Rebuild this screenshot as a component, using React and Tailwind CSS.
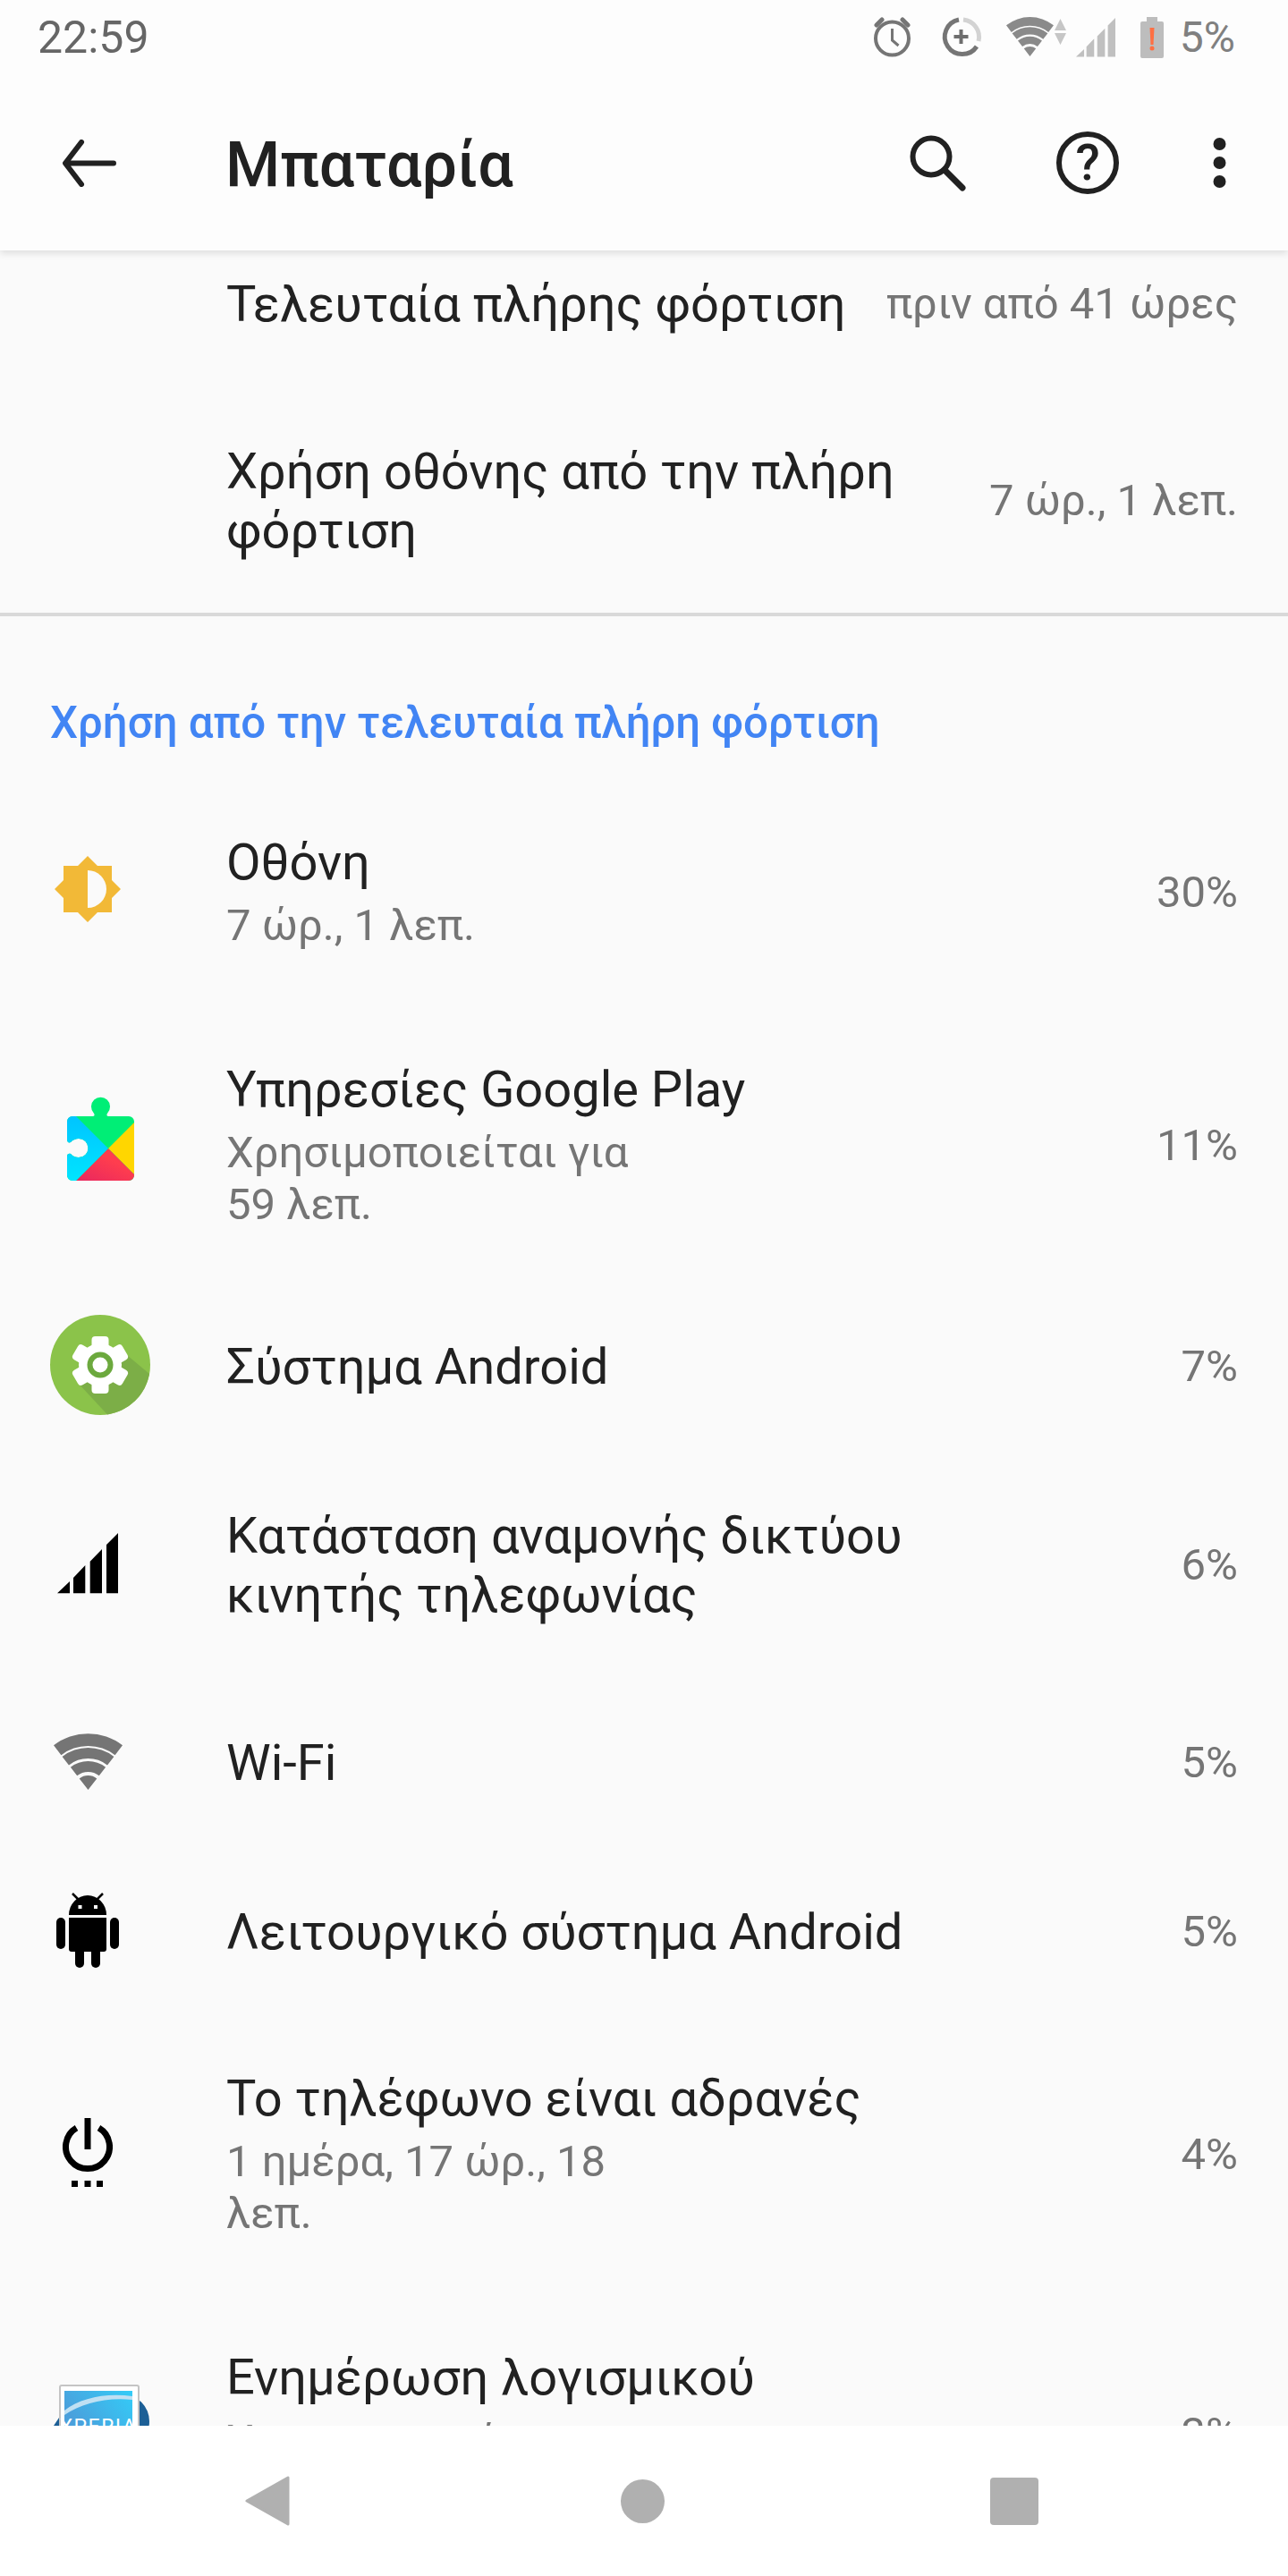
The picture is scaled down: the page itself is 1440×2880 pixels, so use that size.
const WIFI_BANDS = 'M0 13.3A63 63 0 0 1 77 13.3L68.6 24.3A49 49 0 0 0 8.4 24.3zM9.6 25.9A47 47 0 0 1 67.4 25.9L60 35.4A35 35 0 0 0 17 35.4zM18.9 37.8A32 32 0 0 1 58.1 37.8L50.8 47.2A20 20 0 0 0 26.2 47.2zM28.7 50.4A16 16 0 0 1 48.3 50.4L38.5 63z'
const SIGNAL_BARS = 'M0 67.300L14 54V67.300zM18 50L31.300 36V67.300H18zM36.700 31.700L50 18V67.300H36.700zM55 13L68 0V67.300H55z'

const Row = ({ icon, small, title, sub, value, className }) => (
  <div className={`flex items-center pl-[56px] pr-[56px] ${className}`}>
    <div className={`h-[112px] flex-none flex items-center justify-center ${small ? 'w-[84px] mr-[28px]' : 'w-[112px]'}`}>{icon}</div>
    <div className="flex-1 ml-[85px] min-w-0">
      <div className="text-[56px] leading-[66px] text-[#212121] whitespace-pre-line">{title}</div>
      {sub && <div className="text-[49px] leading-[58px] text-[#757575] whitespace-pre-line mt-[9px]">{sub}</div>}
    </div>
    <div className="text-[49px] leading-[58px] text-[#757575]">{value}</div>
  </div>
)

const Sun = () => (
  <svg width="74" height="74" viewBox="0 0 74 74" className="mb-[8px]">
    <path fill="#f2b937" d="M37 0l11 11h16v16l10 10-10 10v16H48L37 74 26 63H10V47L0 37l10-10V11h16z" />
    <path fill="#fafafa" d="M37 16a21 21 0 0 1 0 42z" />
  </svg>
)

const Puzzle = () => (
  <svg width="75" height="96" viewBox="0 0 75 96" className="mb-[17px]">
    <defs>
      <clipPath id="pz">
        <path d="M6 24h23c2 0 2-2 .5-4a10.500 10.500 0 1 1 16 0c-1.500 2-1.500 4 .5 4h23a6 6 0 0 1 6 6v60a6 6 0 0 1-6 6H6a6 6 0 0 1-6-6V69c0-3 2-4 4-3 3 3 6 4 9 4a10.500 10.500 0 0 0 0-21c-3 0-6 1-9 4-2 1-4 0-4-3V30a6 6 0 0 1 6-6z" />
      </clipPath>
      <linearGradient id="pzred" x1="0" y1="1" x2="1" y2="0">
        <stop offset="0" stopColor="#e8275f" />
        <stop offset="0.6" stopColor="#ff3d4e" />
      </linearGradient>
      <linearGradient id="pzblue" x1="0" y1="0" x2="0" y2="1">
        <stop offset="0" stopColor="#00c4ff" />
        <stop offset="1" stopColor="#00e5ff" />
      </linearGradient>
    </defs>
    <g clipPath="url(#pz)">
      <rect width="75" height="96" fill="#00ee76" />
      <path fill="#ffd600" d="M46 60L75 31v58z" />
      <path fill="url(#pzred)" d="M46 60l36 36H10z" />
      <path fill="url(#pzblue)" d="M0 24h10l36 36-36 36H0z" />
    </g>
  </svg>
)

const Gear = () => (
  <svg width="112" height="112" viewBox="0 0 112 112" className="mb-[4px]">
    <circle cx="56" cy="56" r="56" fill="#8bc34a" />
    <path fill="#7cae47" d="M32 77L64 111.500A56 56 0 0 0 111 66L86 45z" />
    <g fill="#fff">
      <circle cx="56" cy="56" r="24" />
      {[0, 60, 120, 180, 240, 300].map(a => (
        <rect key={a} x="46.500" y="24" width="19" height="20" rx="4" transform={`rotate(${a} 56 56)`} />
      ))}
    </g>
    <circle cx="56" cy="56" r="11.500" fill="#fff" stroke="#6ca93e" strokeWidth="6" />
  </svg>
)

const Signal = () => (
  <svg width="68" height="68" viewBox="0 0 68 68" className="mb-[4px]">
    <path fill="#000" d={SIGNAL_BARS} />
  </svg>
)

const Wifi = () => (
  <svg width="77" height="63" viewBox="0 0 77 63" className="mb-[3px]">
    <path fill="#757575" d={WIFI_BANDS} />
  </svg>
)

const Droid = () => (
  <svg width="70" height="84" viewBox="0 0 70 84" className="mb-[4px]">
    <path fill="#000" d="M14 25a21 22 0 0 1 42 0zM14 28h42v35a3 3 0 0 1-3 3H17a3 3 0 0 1-3-3z" />
    <rect x="0" y="28" width="10" height="35" rx="5" />
    <rect x="60" y="28" width="10" height="35" rx="5" />
    <rect x="21" y="60" width="10" height="24" rx="5" />
    <rect x="39" y="60" width="10" height="24" rx="5" />
    <path stroke="#000" strokeWidth="2.500" d="M18 1l7 7M52 1l-7 7" />
    <rect x="24.500" y="14" width="4" height="4" fill="#fafafa" />
    <rect x="42" y="14" width="4" height="4" fill="#fafafa" />
  </svg>
)

const Idle = () => (
  <svg width="56" height="77" viewBox="0 0 56 77" className="mb-[4px]">
    <path fill="none" stroke="#000" strokeWidth="7" d="M15.500 11A24.500 24.500 0 1 0 40.500 11" />
    <rect x="24.500" y="0" width="7" height="35" />
    <rect x="10" y="70" width="7" height="7" />
    <rect x="24.500" y="70" width="7" height="7" />
    <rect x="38" y="70" width="7" height="7" />
  </svg>
)

const Xperia = () => (
  <svg width="112" height="112" viewBox="0 0 112 112">
    <defs>
      <linearGradient id="xp" x1="1" y1="0" x2="0" y2="1">
        <stop offset="0" stopColor="#33ccf8" />
        <stop offset="0.6" stopColor="#4aa0dc" />
      </linearGradient>
    </defs>
    <circle cx="81" cy="42" r="30" fill="#1c5f96" />
    <path d="M2 50L10 38v12z" fill="#1c5f96" />
    <rect x="11" y="2" width="88" height="108" rx="2" fill="#fff" stroke="#c4c4c4" strokeWidth="2" />
    <rect x="16" y="8" width="76" height="96" fill="url(#xp)" />
    <path d="M16 30C34 16 62 10 92 14v4C62 15 36 22 16 35z" fill="#bfe0f3" />
    <text x="54" y="56" textAnchor="middle" fontSize="23" letterSpacing="1.500" fill="#fff" fontFamily="Roboto">XPERIA</text>
  </svg>
)

const StatusIcons = () => (
  <svg width="325" height="46" viewBox="0 0 325 46" className="flex-none">
    <g fill="none" stroke="#757575">
      <circle cx="21.500" cy="24" r="18.500" strokeWidth="4" />
      <path strokeWidth="3" d="M21.500 13v13l7 6" />
      <path strokeWidth="5" strokeLinecap="round" d="M4 9l6-6M39 9l-6-6" />
      <path strokeWidth="5" d="M96 3a19.500 19.500 0 1 0 20 30" />
      <path strokeWidth="5" stroke="#d3d3d3" d="M101 3a19.500 19.500 0 0 1 17 24" />
      <path strokeWidth="4" stroke="#6e6e6e" d="M98.500 14v16M90.500 22h16" />
    </g>
    <g transform="translate(149 0) scale(.688 .7)">
      <path fill="#8a8a8a" d={WIFI_BANDS} />
    </g>
    <path fill="#c6c6c6" d="M203 15l6.500-13 6.500 13zM203 18h13l-6.500 13z" />
    <g transform="translate(227 1) scale(.647)">
      <path fill="#c0c0c0" d={SIGNAL_BARS} />
    </g>
    <path fill="#bdbdbd" d="M306 0h12v5h5a2 2 0 0 1 2 2v37a2 2 0 0 1-2 2h-22a2 2 0 0 1-2-2V7a2 2 0 0 1 2-2h5z" />
    <path fill="#ff7043" d="M309.500 12h5l-1 19h-3z" />
    <circle cx="312" cy="35" r="2.500" fill="#ff7043" />
  </svg>
)

export default function App() {
  return (
    <div className="w-[1440px] h-[2880px] flex flex-col overflow-hidden bg-[#fafafa] font-['Roboto',sans-serif]">
      <header className="relative z-10 flex-none h-[280px] bg-[#fdfdfd] shadow-[0_3px_8px_rgba(0,0,0,0.12)]">
        <div className="h-[84px] flex items-center pl-[42px] pr-[59px]">
          <span className="text-[50px] leading-none text-[#666]">22:59</span>
          <span className="flex-1" />
          <StatusIcons />
          <span className="text-[48px] leading-none text-[#808080] ml-[18px]">5%</span>
        </div>
        <div className="h-[196px] flex items-center pl-[70px] pr-[69px]">
          <svg width="60" height="53" viewBox="0 0 60 53" className="flex-none">
            <path fill="none" stroke="#212121" strokeWidth="6" strokeLinecap="round" strokeLinejoin="round" d="M57 26.500H4M21 3L3 26.500 21 50" />
          </svg>
          <h1 className="ml-[122px] mt-[4px] text-[70px] leading-none font-medium text-[#212121]">Μπαταρία</h1>
          <span className="flex-1" />
          <svg width="63" height="63" viewBox="0 0 63 63" className="flex-none mr-[101px]">
            <circle cx="24" cy="24" r="20.500" fill="none" stroke="#212121" strokeWidth="6" />
            <path stroke="#212121" strokeWidth="7" strokeLinecap="round" d="M39 39l20 20" />
          </svg>
          <div className="w-[70px] h-[70px] flex-none rounded-full border-[6px] border-[#212121] flex items-center justify-center text-[56px] leading-none font-medium text-[#212121] mr-[105px]">?</div>
          <svg width="15" height="56" viewBox="0 0 15 56" className="flex-none">
            <circle cx="7.500" cy="7" r="7" fill="#212121" />
            <circle cx="7.500" cy="28" r="7" fill="#212121" />
            <circle cx="7.500" cy="49" r="7" fill="#212121" />
          </svg>
        </div>
      </header>

      <main className="flex-1 min-h-0 overflow-hidden">
        <div className="flex items-center justify-between pl-[253px] pr-[56px] h-[120px]">
          <div className="text-[56px] leading-[66px] text-[#212121]">Τελευταία πλήρης φόρτιση</div>
          <div className="text-[49px] text-[#757575]">πριν από 41 ώρες</div>
        </div>
        <div className="flex items-center justify-between pl-[253px] pr-[56px] h-[289px] pt-[34px] border-b-[4px] border-[#d9d9d9]">
          <div className="text-[56px] leading-[66px] text-[#212121] w-[800px]">Χρήση οθόνης από την πλήρη φόρτιση</div>
          <div className="text-[49px] text-[#757575]">7 ώρ., 1 λεπ.</div>
        </div>
        <div className="pl-[56px] pt-[86px] text-[49.2px] leading-[66px] font-medium text-[#4285f4]">Χρήση από την τελευταία πλήρη φόρτιση</div>

        <Row small className="mt-[90px]" icon={<Sun />} title="Οθόνη" sub="7 ώρ., 1 λεπ." value="30%" />
        <Row className="mt-[121px]" icon={<Puzzle />} title="Υπηρεσίες Google Play" sub={"Χρησιμοποιείται για\n59 λεπ."} value="11%" />
        <Row className="mt-[96px]" icon={<Gear />} title="Σύστημα Android" value="7%" />
        <Row small className="mt-[100px]" icon={<Signal />} title={"Κατάσταση αναμονής δικτύου\nκινητής τηλεφωνίας"} value="6%" />
        <Row small className="mt-[99px]" icon={<Wifi />} title="Wi-Fi" value="5%" />
        <Row small className="mt-[77px]" icon={<Droid />} title="Λειτουργικό σύστημα Android" value="5%" />
        <Row small className="mt-[97px]" icon={<Idle />} title="Το τηλέφωνο είναι αδρανές" sub={"1 ημέρα, 17 ώρ., 18\nλεπ."} value="4%" />
        <Row className="mt-[121px]" icon={<Xperia />} title="Ενημέρωση λογισμικού" sub={"Χρησιμοποιείται για\n1 λεπ."} value="3%" />
      </main>

      <nav className="relative z-10 flex-none h-[168px] bg-white flex items-center pl-[274px]">
        <svg width="50" height="56" viewBox="0 0 50 56" className="flex-none">
          <path fill="#b0b0b0" stroke="#b0b0b0" strokeWidth="3" strokeLinejoin="round" d="M48 2v52L2 28z" />
        </svg>
        <div className="w-[49px] h-[49px] flex-none rounded-full bg-[#b0b0b0] ml-[370px]" />
        <div className="w-[54px] h-[53px] flex-none rounded-[4px] bg-[#b0b0b0] ml-[364px]" />
      </nav>
    </div>
  )
}
